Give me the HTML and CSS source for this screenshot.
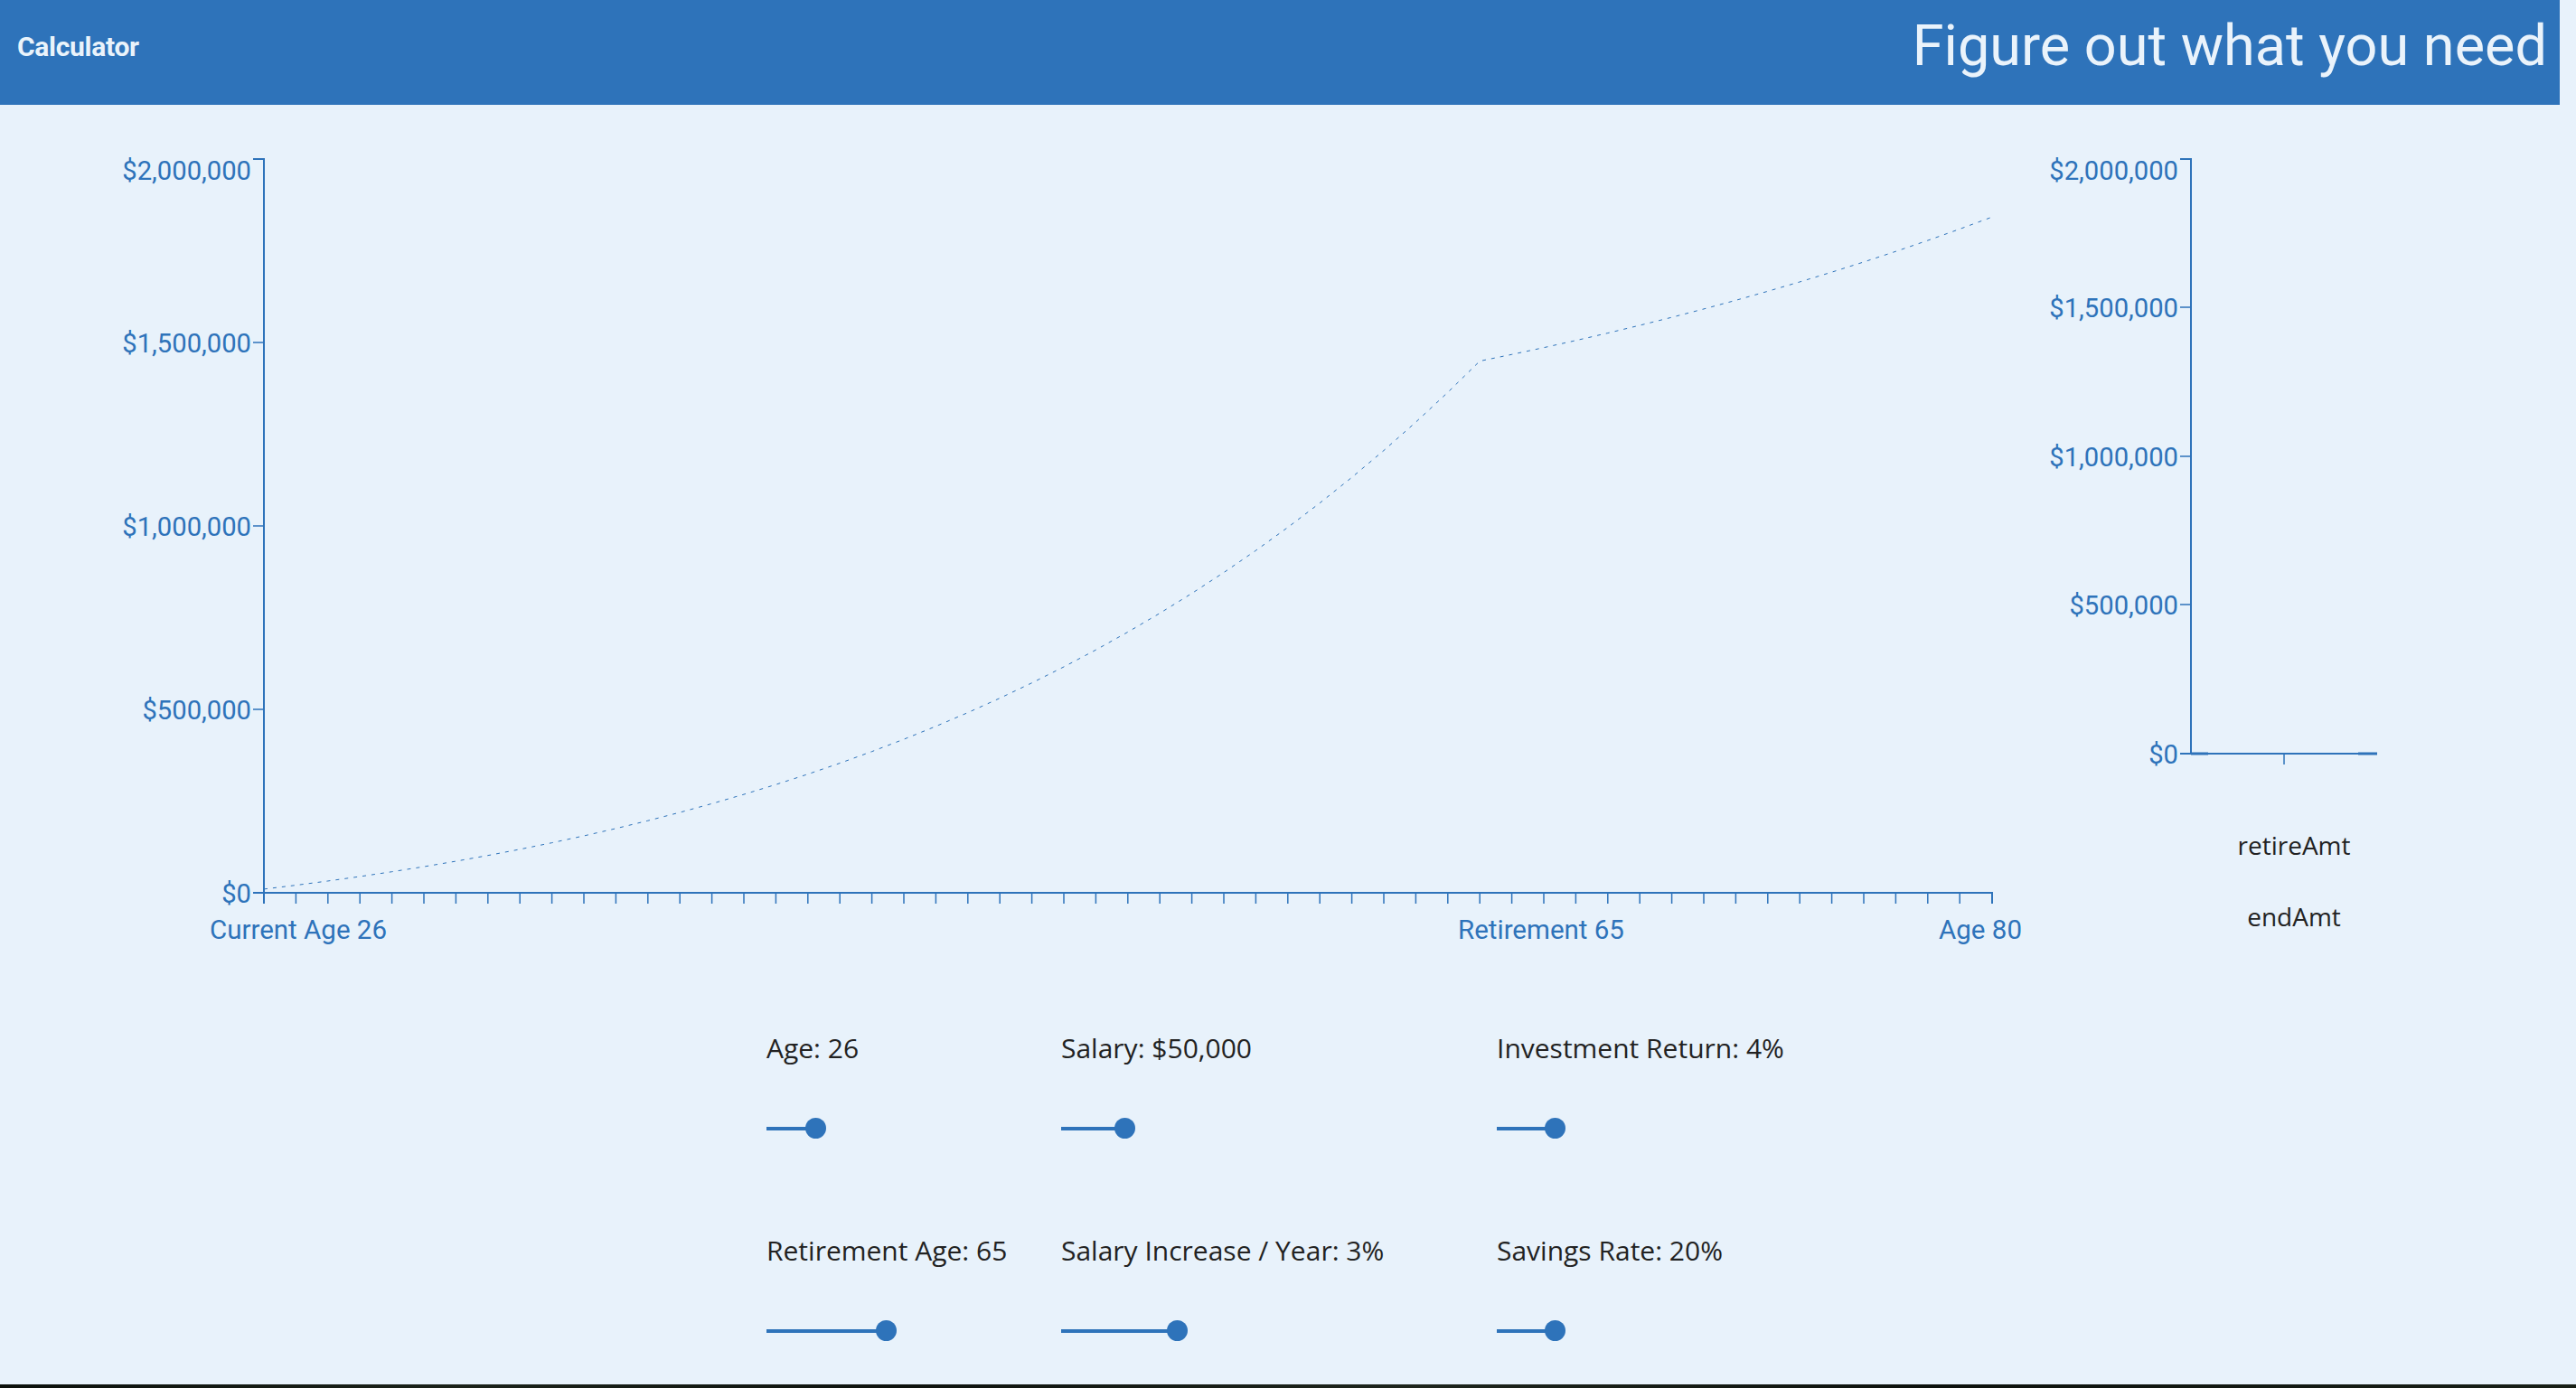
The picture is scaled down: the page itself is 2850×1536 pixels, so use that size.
FILE: index.html
```html
<!DOCTYPE html>
<html lang="en">
<head>
<meta charset="utf-8">
<title>Calculator</title>
<link rel="stylesheet" href="styles.css">
</head>
<body>
<header class="topbar">
  <div class="brand">Calculator</div>
  <h1 class="headline">Figure out what you need</h1>
</header>

<section class="charts">
  <svg class="chart-main" width="2280" height="1024" viewBox="0 0 2280 1024">
    <g transform="translate(0 -116)">
      <g class="axis">
        <path class="domain" d="M280,176H292V988H280"/>
        <path class="ticks" d="M280,176H292M280,379H292M280,582H292M280,785H292M280,988H292"/>
        <text class="ylabel" x="278" y="199">$2,000,000</text>
        <text class="ylabel" x="278" y="390">$1,500,000</text>
        <text class="ylabel" x="278" y="593">$1,000,000</text>
        <text class="ylabel" x="278" y="796">$500,000</text>
        <text class="ylabel" x="278" y="999">$0</text>
      </g>
      <g class="axis">
        <path class="domain" d="M292,1000V988H2204V1000"/>
        <path class="ticks" d="M327.4,988V1000M362.8,988V1000M398.2,988V1000M433.6,988V1000M469,988V1000M504.4,988V1000M539.8,988V1000M575.2,988V1000M610.6,988V1000M646,988V1000M681.4,988V1000M716.8,988V1000M752.2,988V1000M787.6,988V1000M823,988V1000M858.4,988V1000M893.8,988V1000M929.2,988V1000M964.6,988V1000M1000,988V1000M1035.4,988V1000M1070.8,988V1000M1106.2,988V1000M1141.6,988V1000M1177,988V1000M1212.4,988V1000M1247.8,988V1000M1283.2,988V1000M1318.6,988V1000M1354,988V1000M1389.4,988V1000M1424.8,988V1000M1460.2,988V1000M1495.6,988V1000M1531,988V1000M1566.4,988V1000M1601.8,988V1000M1637.2,988V1000M1672.6,988V1000M1708,988V1000M1743.4,988V1000M1778.8,988V1000M1814.2,988V1000M1849.6,988V1000M1885,988V1000M1920.4,988V1000M1955.8,988V1000M1991.2,988V1000M2026.6,988V1000M2062,988V1000M2097.4,988V1000M2132.8,988V1000M2168.2,988V1000"/>
        <text class="xlabel" x="232" y="1039">Current Age 26</text>
        <text class="xlabel" x="1613" y="1039">Retirement 65</text>
        <text class="xlabel end" x="2237" y="1039">Age 80</text>
      </g>
      <polyline class="curve" points="292,983.9 327.4,979.6 362.8,974.95 398.2,969.99 433.6,964.7 469,959.07 504.4,953.06 539.8,946.67 575.2,939.87 610.6,932.65 646,924.98 681.4,916.84 716.8,908.2 752.2,899.05 787.6,889.35 823,879.08 858.4,868.21 893.8,856.71 929.2,844.54 964.6,831.69 1000,818.1 1035.4,803.75 1070.8,788.6 1106.2,772.61 1141.6,755.74 1177,737.95 1212.4,719.2 1247.8,699.43 1283.2,678.59 1318.6,656.65 1354,633.54 1389.4,609.21 1424.8,583.61 1460.2,556.66 1495.6,528.32 1531,498.5 1566.4,467.16 1601.8,434.2 1637.2,399.57 1672.6,392.27 1708,384.68 1743.4,376.79 1778.8,368.58 1814.2,360.04 1849.6,351.17 1885,341.93 1920.4,332.33 1955.8,322.34 1991.2,311.96 2026.6,301.15 2062,289.92 2097.4,278.24 2132.8,266.09 2168.2,253.46 2203.6,240.31"/>
    </g>
  </svg>

  <svg class="chart-side" width="570" height="1024" viewBox="0 0 570 1024">
    <g transform="translate(-2280 -116)">
      <g class="axis">
        <path class="domain" d="M2412,176H2424V834H2412"/>
        <path class="ticks" d="M2412,340H2424M2412,505H2424M2412,669H2424"/>
        <text class="ylabel" x="2410" y="199">$2,000,000</text>
        <text class="ylabel" x="2410" y="351">$1,500,000</text>
        <text class="ylabel" x="2410" y="516">$1,000,000</text>
        <text class="ylabel" x="2410" y="680">$500,000</text>
        <text class="ylabel" x="2410" y="845">$0</text>
      </g>
      <g class="axis">
        <path class="domain" d="M2424,834H2630"/>
        <path class="ticks" d="M2527,834V846"/>
        <path class="bar" d="M2424,834H2443M2609,834H2630"/>
        <text class="blabel" x="2538" y="946">retireAmt</text>
        <text class="blabel" x="2538" y="1025">endAmt</text>
      </g>
    </g>
  </svg>
</section>

<section class="controls">
  <div class="control">
    <div class="control-label">Age: 26</div>
    <div class="slider"><div class="fill" style="width:54px"></div><div class="thumb"></div></div>
  </div>
  <div class="control">
    <div class="control-label">Salary: $50,000</div>
    <div class="slider"><div class="fill" style="width:70px"></div><div class="thumb"></div></div>
  </div>
  <div class="control">
    <div class="control-label">Investment Return: 4%</div>
    <div class="slider"><div class="fill" style="width:64px"></div><div class="thumb"></div></div>
  </div>
  <div class="control">
    <div class="control-label">Retirement Age: 65</div>
    <div class="slider"><div class="fill" style="width:132px"></div><div class="thumb"></div></div>
  </div>
  <div class="control">
    <div class="control-label">Salary Increase / Year: 3%</div>
    <div class="slider"><div class="fill" style="width:128px"></div><div class="thumb"></div></div>
  </div>
  <div class="control">
    <div class="control-label">Savings Rate: 20%</div>
    <div class="slider"><div class="fill" style="width:64px"></div><div class="thumb"></div></div>
  </div>
</section>

<div class="spacer"></div>
<footer class="strip"></footer>
</body>
</html>
```

FILE: styles.css
```css
html, body {
  margin: 0;
  padding: 0;
}

body {
  width: 2850px;
  height: 1536px;
  overflow: hidden;
  background: #e8f2fb;
  display: flex;
  flex-direction: column;
  font-family: "Open Sans", "Noto Sans", sans-serif;
}

.topbar {
  width: 2832px;
  height: 116px;
  box-sizing: border-box;
  flex: none;
  background: #2e73ba;
  color: #eaf3fb;
  display: flex;
  justify-content: space-between;
  align-items: flex-start;
  padding: 0 14px 0 19px;
  font-family: Roboto, "Liberation Sans", sans-serif;
}

.brand {
  font-size: 30px;
  font-weight: 700;
  line-height: normal;
  margin-top: 34px;
  letter-spacing: -0.3px;
}

.headline {
  margin: 14px 0 0 0;
  font-size: 63px;
  font-weight: 400;
  line-height: normal;
}

.charts {
  display: flex;
  flex: none;
  height: 1024px;
}

.charts svg {
  display: block;
  overflow: visible;
  flex: none;
}

.axis .domain {
  fill: none;
  stroke: #2e73ba;
  stroke-width: 2;
}

.axis .ticks {
  fill: none;
  stroke: #2e73ba;
  stroke-width: 1.5;
}

.axis .bar {
  fill: none;
  stroke: #2e73ba;
  stroke-width: 3;
}

.ylabel {
  font-family: Roboto, "Liberation Sans", sans-serif;
  font-size: 29.2px;
  fill: #2e73ba;
  text-anchor: end;
}

.xlabel {
  font-family: Roboto, "Liberation Sans", sans-serif;
  font-size: 29.5px;
  fill: #2e73ba;
  text-anchor: start;
}

.xlabel.end {
  text-anchor: end;
}

.blabel {
  font-family: "Open Sans", "Noto Sans", sans-serif;
  font-size: 28px;
  fill: #222222;
  text-anchor: middle;
}

.curve {
  fill: none;
  stroke: #2e73ba;
  stroke-width: 1;
  stroke-dasharray: 4 6;
}

.controls {
  flex: none;
  display: grid;
  grid-template-columns: 326px 482px auto;
  row-gap: 104px;
  padding-left: 848px;
}

.control-label {
  font-size: 30px;
  line-height: 40px;
  color: #222222;
  white-space: nowrap;
}

.slider {
  display: flex;
  align-items: center;
  height: 23px;
  margin-top: 57px;
}

.fill {
  height: 4px;
  background: #2e73ba;
  flex: none;
}

.thumb {
  width: 23px;
  height: 23px;
  border-radius: 50%;
  background: #2e73ba;
  margin-left: -11.5px;
  flex: none;
}

.spacer {
  flex: 1 1 auto;
}

.strip {
  flex: none;
  height: 4px;
  background: linear-gradient(90deg, #0c110c 0%, #1b231a 18%, #0e130e 35%, #1e261d 55%, #0d120d 75%, #182017 100%);
}
```
